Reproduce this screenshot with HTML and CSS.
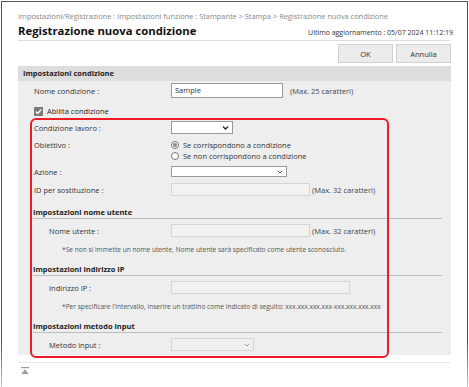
FILE: index.html
```html
<!DOCTYPE html>
<html lang="it">
<head>
    <meta charset="UTF-8">
    <title>Registrazione nuova condizione</title>
    <link rel="stylesheet" href="styles.css">
</head>
<body>
<div class="window">
    <div class="crumb">Impostazioni/Registrazione : Impostazioni funzione : Stampante &gt; Stampa &gt; Registrazione nuova condizione</div>
    <div class="title-row">
        <h1>Registrazione nuova condizione</h1>
        <span class="updated">Ultimo aggiornamento : 05/07 2024 11:12:19</span>
    </div>
    <div class="buttons">
        <button class="btn">OK</button>
        <button class="btn">Annulla</button>
    </div>

    <div class="panel">
        <div class="panel-head">Impostazioni condizione</div>

        <div class="row r-nome">
            <span class="label">Nome condizione :</span>
            <span class="input w111">Sample</span>
            <span class="hint">(Max. 25 caratteri)</span>
        </div>

        <div class="row r-check">
            <span class="check"><svg width="9" height="9" viewBox="0 0 9 9"><path d="M1.8 4.6 L3.7 6.5 L7.3 2.4" fill="none" stroke="#fff" stroke-width="1.4"/></svg></span>
            <span>Abilita condizione</span>
        </div>

        <div class="row r-lavoro">
            <span class="label">Condizione lavoro :</span>
            <span class="select w61"><svg class="chev" width="7" height="5" viewBox="0 0 7 5"><path d="M1 1 L3.5 3.5 L6 1" fill="none" stroke="#222" stroke-width="1.3"/></svg></span>
        </div>

        <div class="row r-obiettivo">
            <span class="label">Obiettivo :</span>
            <div class="radios">
                <div class="radio-line"><span class="radio on"></span>Se corrispondono a condizione</div>
                <div class="radio-line"><span class="radio"></span>Se non corrispondono a condizione</div>
            </div>
        </div>

        <div class="row r-azione">
            <span class="label">Azione :</span>
            <span class="select w115 thin"><svg class="chev" width="6" height="4" viewBox="0 0 6 4"><path d="M1 1 L3 3 L5 1" fill="none" stroke="#444" stroke-width="1"/></svg></span>
        </div>

        <div class="row r-id">
            <span class="label">ID per sostituzione :</span>
            <span class="input off w139"></span>
            <span class="hint">(Max. 32 caratteri)</span>
        </div>

        <div class="subhead s1">Impostazioni nome utente</div>
        <div class="row r-sub">
            <span class="label sublabel">Nome utente :</span>
            <span class="input off w139"></span>
            <span class="hint">(Max. 32 caratteri)</span>
        </div>
        <div class="note">*Se non si immette un nome utente, Nome utente sarà specificato come utente sconosciuto.</div>

        <div class="subhead s2">Impostazioni indirizzo IP</div>
        <div class="row r-sub">
            <span class="label sublabel">Indirizzo IP :</span>
            <span class="input off w178"></span>
        </div>
        <div class="note">*Per specificare l'intervallo, inserire un trattino come indicato di seguito: xxx.xxx.xxx.xxx-xxx.xxx.xxx.xxx</div>

        <div class="subhead s2">Impostazioni metodo input</div>
        <div class="row r-metodo">
            <span class="label sublabel">Metodo input :</span>
            <span class="select off w82"><svg class="chev" width="6" height="4" viewBox="0 0 6 4"><path d="M1 1 L3 3 L5 1" fill="none" stroke="#999" stroke-width="1"/></svg></span>
        </div>

        <!-- cornice rossa di evidenziazione -->
        <div class="highlight"></div>
    </div>

    <div class="foot">
        <svg width="8" height="8" viewBox="0 0 8 8"><rect x="0" y="0" width="8" height="1.2" fill="#999"/><path d="M4 2.2 L7.6 7 L0.4 7 Z" fill="#999"/></svg>
    </div>
</div>
</body>
</html>
```

FILE: styles.css
```css
body {
    margin: 0;
    font-family: "Open Sans", "Noto Sans", sans-serif;
    font-size: 7.5px;
    color: #333;
    background: #fff;
}
.window {
    margin: 1px 0 0 1px;
    width: 433px;
    height: 386px;
    padding: 0 16px;
    border: 1px solid #555;
    border-bottom: none;
    border-image: linear-gradient(to bottom, #555 88%, #ccc) 1;
    box-sizing: content-box;
}
.crumb {
    padding-top: 9px;
    height: 11px;
    line-height: 11px;
    color: #888;
    font-size: 7.4px;
    white-space: nowrap;
}
.title-row {
    display: flex;
    justify-content: space-between;
    align-items: flex-end;
    height: 18px;
    border-bottom: 1px solid #ddd;
}
h1 {
    margin: 0;
    font-size: 11.3px;
    font-weight: bold;
    color: #111;
    line-height: 16px;
    padding-bottom: 1px;
}
.updated {
    font-size: 7px;
    color: #333;
    line-height: 10px;
    padding-bottom: 2px;
    margin-right: -2px;
}
.buttons {
    display: flex;
    justify-content: flex-end;
    gap: 3px;
    padding-top: 3px;
}
.btn {
    width: 55px;
    height: 19px;
    padding: 0;
    font-family: inherit;
    font-size: 7.5px;
    color: #333;
    background: #ececec;
    border: 1px solid #d0d0d0;
    border-radius: 0;
}
.panel {
    position: relative;
    margin-top: 3px;
    background: #eee;
    padding: 0 7px 4px 16px;
}
.panel-head {
    margin: 0 -7px 0 -16px;
    padding-left: 5px;
    height: 15px;
    line-height: 15px;
    background: #ddd;
    font-weight: bold;
    color: #222;
}
.row {
    display: flex;
    align-items: center;
}
.label {
    width: 137px;
    flex: none;
}
.sublabel {
    padding-left: 15px;
    width: 122px;
}
.input, .select {
    display: inline-block;
    box-sizing: border-box;
    height: 13px;
    line-height: 11px;
    background: #fff;
    border: 1px solid #999;
    padding-left: 3px;
    flex: none;
}
.input.off {
    background: #f2f2f2;
    border-color: #d6d6d6;
}
.select {
    position: relative;
}
.select.thin {
    height: 11px;
}
.select.off {
    background: #efefef;
    border-color: #d6d6d6;
    height: 13px;
}
.chev {
    position: absolute;
    right: 3px;
    top: 50%;
    transform: translateY(-50%);
}
.hint {
    margin-left: 4px;
    color: #444;
}
.w61 { width: 62px; }
.w82 { width: 83px; }
.w111 { width: 112px; height: 15px; line-height: 13px; }
.w115 { width: 116px; }
.w139 { width: 139px; }
.w178 { width: 179px; }
.r-nome { margin-top: 2px; height: 15px; }
.r-nome .hint { margin-left: 7px; }
.r-check { margin-top: 7px; height: 12px; color: #222; }
.check {
    width: 9px;
    height: 9px;
    margin: 0 4px 0 0;
    background: #7a7a7a;
    display: inline-flex;
}
.r-lavoro { margin-top: 4px; height: 13px; }
.r-obiettivo {
    margin-top: 5px;
    align-items: flex-start;
}
.r-obiettivo .label { line-height: 11px; padding-top: 1px; }
.radio-line {
    display: flex;
    align-items: center;
    height: 11px;
}
.radio {
    width: 8px;
    height: 8px;
    box-sizing: border-box;
    border: 1px solid #777;
    border-radius: 50%;
    background: #fff;
    margin-right: 4px;
    position: relative;
}
.radio.on::after {
    content: "";
    position: absolute;
    left: 1px;
    top: 1px;
    width: 4px;
    height: 4px;
    border-radius: 50%;
    background: #888;
}
.r-azione { margin-top: 5px; height: 11px; }
.r-id { margin-top: 6px; height: 13px; }
.r-id .hint, .r-sub .hint { margin-left: 2px; }
.subhead {
    margin: 10px 0 0 -1px;
    width: 409px;
    height: 12px;
    line-height: 12px;
    font-weight: bold;
    color: #222;
    border-bottom: 1px solid #bdbdbd;
}
.s2 { margin-top: 8px; }
.r-sub { margin-top: 5px; height: 13px; }
.note {
    margin-top: 8px;
    padding-left: 28px;
    height: 10px;
    line-height: 10px;
    font-size: 6.6px;
    color: #555;
    white-space: nowrap;
}
.r-metodo { margin-top: 5px; height: 13px; }
.highlight {
    position: absolute;
    left: 12px;
    top: 52px;
    width: 359px;
    height: 240px;
    box-sizing: border-box;
    border: 2px solid #ee1c24;
    border-radius: 6px;
}
.foot {
    margin-top: 7px;
    border-top: 1px solid #e6e6e6;
    padding: 4px 0 0 3px;
}
```
